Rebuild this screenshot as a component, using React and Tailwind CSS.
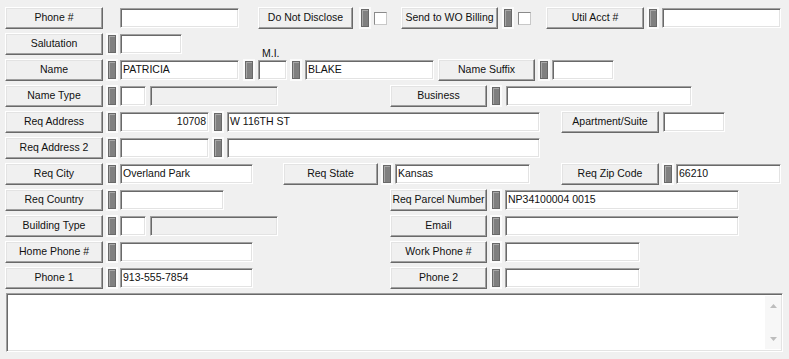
import React from 'react';

const Btn = ({ className = '', children }) => (
  <div
    className={`h-[22px] shrink-0 flex items-center justify-center bg-[#f0f0f0] border border-t-white border-l-white border-b-[#696969] border-r-[#696969] shadow-[inset_-1px_-1px_0_#a0a0a0,inset_1px_1px_0_#e3e3e3] whitespace-nowrap ${className}`}
  >
    {children}
  </div>
);

const Field = ({ className = '', value = '', right = false, disabled = false }) => (
  <div
    className={`h-[20px] shrink-0 flex items-center px-[2px] border border-t-[#a0a0a0] border-l-[#a0a0a0] border-b-white border-r-white shadow-[inset_1px_1px_0_#696969,inset_-1px_-1px_0_#e3e3e3] whitespace-nowrap overflow-hidden ${
      disabled ? 'bg-[#f0f0f0]' : 'bg-white'
    } ${right ? 'justify-end' : 'justify-start'} ${className}`}
  >
    {value}
  </div>
);

const Ind = ({ className = '' }) => (
  <div className={`w-[12px] h-[22px] shrink-0 bg-[#fbfbfb] p-[2px] ${className}`}>
    <div className="h-full border border-[#696969] bg-[#808080] shadow-[inset_1px_1px_0_#a8a8a8]" />
  </div>
);

const Check = ({ className = '' }) => (
  <div
    className={`w-[13px] h-[13px] shrink-0 bg-white border border-t-[#8a8a8a] border-l-[#8a8a8a] border-b-[#c8c8c8] border-r-[#c8c8c8] ${className}`}
  />
);

const Row = ({ children }) => <div className="flex items-center h-[22px] mb-[4px]">{children}</div>;

export default function App() {
  return (
    <div className="w-[789px] h-[359px] bg-[#f0f0f0] pt-[7px] overflow-hidden font-['Liberation_Sans',Arial,sans-serif] text-[10.5px] text-[#111]">
      {/* Phone # */}
      <Row>
        <Btn className="ml-[5px] w-[98px]">Phone #</Btn>
        <Field className="ml-[17px] w-[119px]" />
        <Btn className="ml-[19px] w-[95px]">Do Not Disclose</Btn>
        <Ind className="ml-[6px]" />
        <Check className="ml-[3px]" />
        <Btn className="ml-[14px] w-[97px]">Send to WO Billing</Btn>
        <Ind className="ml-[4px]" />
        <Check className="ml-[4px]" />
        <Btn className="ml-[15px] w-[98px]">Util Acct #</Btn>
        <Ind className="ml-[3px]" />
        <Field className="ml-[3px] w-[119px]" />
      </Row>

      {/* Salutation */}
      <Row>
        <Btn className="ml-[5px] w-[98px]">Salutation</Btn>
        <Ind className="ml-[3px]" />
        <Field className="ml-[2px] w-[62px]" />
        <div className="ml-[80px] self-start mt-[14px] h-[12px] leading-[12px]">M.I.</div>
      </Row>

      {/* Name */}
      <Row>
        <Btn className="ml-[5px] w-[98px]">Name</Btn>
        <Ind className="ml-[3px]" />
        <Field className="ml-[2px] w-[119px]" value="PATRICIA" />
        <Ind className="ml-[4px]" />
        <Field className="ml-[3px] w-[29px]" />
        <Ind className="ml-[3px]" />
        <Field className="ml-[3px] w-[129px]" value="BLAKE" />
        <Btn className="ml-[4px] w-[97px]">Name Suffix</Btn>
        <Ind className="ml-[3px]" />
        <Field className="ml-[2px] w-[62px]" />
      </Row>

      {/* Name Type */}
      <Row>
        <Btn className="ml-[5px] w-[98px]">Name Type</Btn>
        <Ind className="ml-[3px]" />
        <Field className="ml-[2px] w-[26px]" />
        <Field className="ml-[4px] w-[128px]" disabled />
        <Btn className="ml-[112px] w-[97px]">Business</Btn>
        <Ind className="ml-[3px]" />
        <Field className="ml-[4px] w-[186px]" />
      </Row>

      {/* Req Address */}
      <Row>
        <Btn className="ml-[5px] w-[98px]">Req Address</Btn>
        <Ind className="ml-[3px]" />
        <Field className="ml-[2px] w-[89px]" value="10708" right />
        <Ind className="ml-[3px]" />
        <Field className="ml-[3px] w-[313px]" value="W 116TH ST" />
        <Btn className="ml-[21px] w-[98px]">Apartment/Suite</Btn>
        <Field className="ml-[4px] w-[62px]" />
      </Row>

      {/* Req Address 2 */}
      <Row>
        <Btn className="ml-[5px] w-[98px]">Req Address 2</Btn>
        <Ind className="ml-[3px]" />
        <Field className="ml-[2px] w-[89px]" />
        <Ind className="ml-[3px]" />
        <Field className="ml-[3px] w-[313px]" />
      </Row>

      {/* Req City */}
      <Row>
        <Btn className="ml-[5px] w-[98px]">Req City</Btn>
        <Ind className="ml-[3px]" />
        <Field className="ml-[2px] w-[133px]" value="Overland Park" />
        <Btn className="ml-[30px] w-[95px]">Req State</Btn>
        <Ind className="ml-[3px]" />
        <Field className="ml-[2px] w-[135px]" value="Kansas" />
        <Btn className="ml-[31px] w-[98px]">Req Zip Code</Btn>
        <Ind className="ml-[3px]" />
        <Field className="ml-[2px] w-[105px]" value="66210" />
      </Row>

      {/* Req Country */}
      <Row>
        <Btn className="ml-[5px] w-[98px]">Req Country</Btn>
        <Ind className="ml-[3px]" />
        <Field className="ml-[2px] w-[104px]" />
        <Btn className="ml-[166px] w-[97px]">Req Parcel Number</Btn>
        <Ind className="ml-[3px]" />
        <Field className="ml-[3px] w-[234px]" value="NP34100004 0015" />
      </Row>

      {/* Building Type */}
      <Row>
        <Btn className="ml-[5px] w-[98px]">Building Type</Btn>
        <Ind className="ml-[3px]" />
        <Field className="ml-[2px] w-[26px]" />
        <Field className="ml-[4px] w-[128px]" disabled />
        <Btn className="ml-[112px] w-[97px]">Email</Btn>
        <Ind className="ml-[3px]" />
        <Field className="ml-[3px] w-[234px]" />
      </Row>

      {/* Home Phone # */}
      <Row>
        <Btn className="ml-[5px] w-[98px]">Home Phone #</Btn>
        <Ind className="ml-[3px]" />
        <Field className="ml-[2px] w-[133px]" />
        <Btn className="ml-[137px] w-[97px]">Work Phone #</Btn>
        <Ind className="ml-[3px]" />
        <Field className="ml-[3px] w-[135px]" />
      </Row>

      {/* Phone 1 */}
      <Row>
        <Btn className="ml-[5px] w-[98px]">Phone 1</Btn>
        <Ind className="ml-[3px]" />
        <Field className="ml-[2px] w-[133px]" value="913-555-7854" />
        <Btn className="ml-[137px] w-[97px]">Phone 2</Btn>
        <Ind className="ml-[3px]" />
        <Field className="ml-[3px] w-[135px]" />
      </Row>

      {/* Memo */}
      <div className="ml-[6px] mt-[1px] w-[777px] h-[59px] flex bg-white border border-t-[#a0a0a0] border-l-[#a0a0a0] border-b-white border-r-white shadow-[inset_1px_1px_0_#696969,inset_-1px_-1px_0_#e3e3e3]">
        <div className="flex-1" />
        <div className="w-[16px] my-[2px] mr-[1px] bg-[#f7f7f7] flex flex-col items-center justify-between py-[8px]">
          <svg width="7" height="4" viewBox="0 0 7 4">
            <path d="M0 4 L3.5 0 L7 4 Z" fill="#bdbdbd" />
          </svg>
          <svg width="7" height="4" viewBox="0 0 7 4">
            <path d="M0 0 L3.5 4 L7 0 Z" fill="#bdbdbd" />
          </svg>
        </div>
      </div>
    </div>
  );
}
